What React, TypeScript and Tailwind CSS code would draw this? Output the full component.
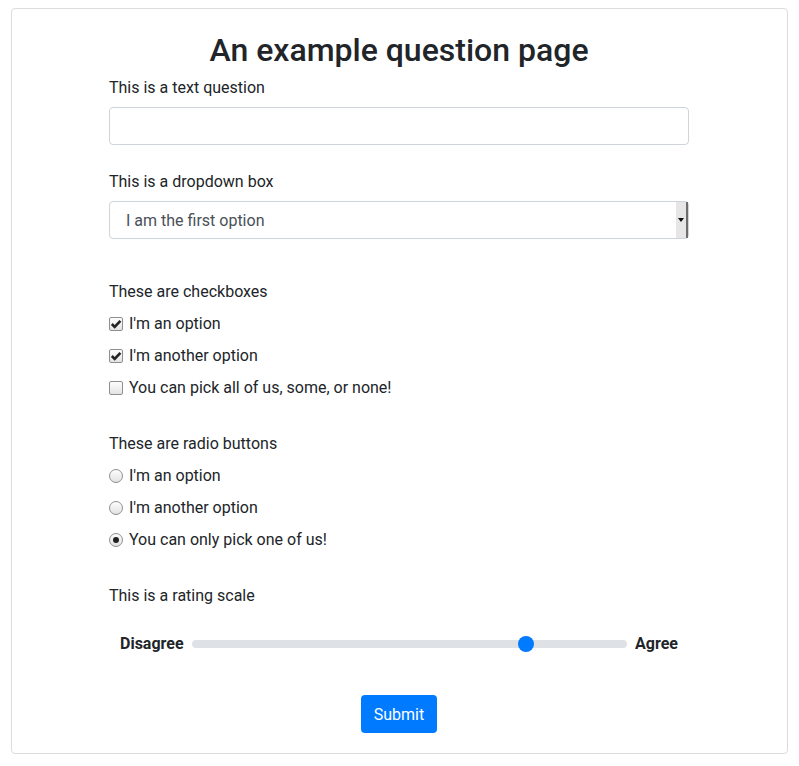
import React from 'react';

const Check = ({ checked }: { checked: boolean }) => (
  <span className="mr-[6px] inline-flex h-[14px] w-[14px] shrink-0 items-center justify-center rounded-[2px] border border-[#8f8f8f] bg-gradient-to-b from-[#fdfdfd] to-[#e4e4e4]">
    {checked && (
      <svg viewBox="0 0 12 12" className="h-[12px] w-[12px]">
        <path d="M1.8 6 L4.7 8.9 L10.4 2.8" fill="none" stroke="#222" strokeWidth="2.6" />
      </svg>
    )}
  </span>
);

const Radio = ({ checked }: { checked: boolean }) => (
  <span className="mr-[6px] inline-flex h-[14px] w-[14px] shrink-0 items-center justify-center rounded-full border border-[#8f8f8f] bg-gradient-to-b from-[#fdfdfd] to-[#e2e2e2]">
    {checked && <span className="h-[6px] w-[6px] rounded-full bg-[#222]" />}
  </span>
);

export default function App() {
  const checkboxes = [
    { label: "I'm an option", checked: true },
    { label: "I'm another option", checked: true },
    { label: 'You can pick all of us, some, or none!', checked: false },
  ];
  const radios = [
    { label: "I'm an option", checked: false },
    { label: "I'm another option", checked: false },
    { label: 'You can only pick one of us!', checked: true },
  ];

  return (
    <div className="bg-white pt-[8px] pb-[12px] font-['Roboto',sans-serif] text-[16px] text-[#212529]">
      <div className="mx-[11px] rounded-[4px] border border-[#dcdcdc] pb-[20px]">
        <div className="ml-[97px] w-[580px]">
          <h1 className="mt-[22px] text-center text-[32px] leading-[38px] font-medium">An example question page</h1>

          <div className="mt-[6px] pt-[1px] leading-[24px]">This is a text question</div>
          <div className="mt-[7px] h-[38px] rounded-[4px] border border-[#ced4da] bg-white" />

          <div className="mt-[24px] pt-[1px] leading-[24px]">This is a dropdown box</div>
          <div className="mt-[7px] flex h-[38px] items-center rounded-[4px] border border-[#ced4da] bg-white pl-[16px] pr-0">
            <span className="flex-1 pt-[1px] text-[#495057]">I am the first option</span>
            <span className="flex h-[36px] w-[12px] items-center justify-center border-r-2 border-r-[#6d6d6d] bg-[#e6e6e6]">
              <svg viewBox="0 0 6 4" className="h-[4px] w-[6px]">
                <path d="M0 0 H6 L3 4 Z" fill="#111" />
              </svg>
            </span>
          </div>

          <div className="mt-[40px] pt-[1px] leading-[24px]">These are checkboxes</div>
          <div className="mt-[7px] flex flex-col gap-[8px]">
            {checkboxes.map((c) => (
              <label key={c.label} className="flex h-[24px] items-center pt-[2px]">
                <Check checked={c.checked} />
                <span>{c.label}</span>
              </label>
            ))}
          </div>

          <div className="mt-[32px] pt-[1px] leading-[24px]">These are radio buttons</div>
          <div className="mt-[7px] flex flex-col gap-[8px]">
            {radios.map((r) => (
              <label key={r.label} className="flex h-[24px] items-center pt-[2px]">
                <Radio checked={r.checked} />
                <span>{r.label}</span>
              </label>
            ))}
          </div>

          <div className="mt-[32px] pt-[1px] leading-[24px]">This is a rating scale</div>
          <div className="mt-[23px] flex h-[24px] items-center gap-[8px] px-[11px] pt-[2px]">
            <span className="font-bold">Disagree</span>
            <div className="relative h-[8px] flex-1 rounded-full bg-[#dee2e6]">
              <span className="absolute top-1/2 left-[326px] h-[16px] w-[16px] -translate-y-1/2 rounded-full bg-[#007bff]" />
            </div>
            <span className="font-bold">Agree</span>
          </div>

          <div className="mt-[40px] flex justify-center">
            <button className="h-[38px] rounded-[4px] bg-[#007bff] px-[13px] pt-[1px] leading-[24px] text-white">Submit</button>
          </div>
        </div>
      </div>
    </div>
  );
}
